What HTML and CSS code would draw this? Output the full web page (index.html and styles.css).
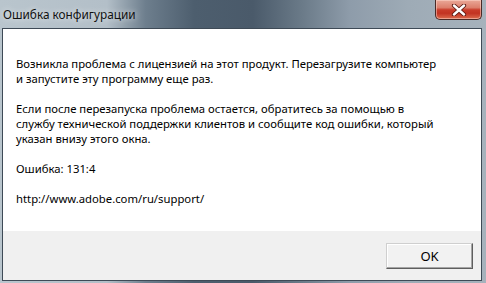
FILE: index.html
```html
<!DOCTYPE html>
<html>
<head>
<meta charset="UTF-8">
<title>Ошибка конфигурации</title>
<link rel="stylesheet" href="styles.css">
</head>
<body>
    <div class="window">
        <div class="titlebar">
            <span class="title">Ошибка конфигурации</span>
            <div class="close">
                <svg width="16" height="12" viewBox="0 0 16 12">
                    <path d="M3 1.5 L13 10.5 M13 1.5 L3 10.5" stroke="#5a1810" stroke-width="4.2" stroke-linecap="round"/>
                    <path d="M3 1.5 L13 10.5 M13 1.5 L3 10.5" stroke="#ffffff" stroke-width="2.4" stroke-linecap="round"/>
                </svg>
            </div>
        </div>
        <div class="client">
            <div class="message">
                <p>Возникла проблема с лицензией на этот продукт. Перезагрузите компьютер<br>и запустите эту программу еще раз.</p>
                <p>Если после перезапуска проблема остается, обратитесь за помощью в<br>службу технической поддержки клиентов и сообщите код ошибки, который<br>указан внизу этого окна.</p>
                <p>Ошибка: 131:4</p>
                <p>http://www.adobe.com/ru/support/</p>
            </div>
            <div class="footer">
                <button class="ok">OK</button>
            </div>
        </div>
    </div>
</body>
</html>
```

FILE: styles.css
```css
* {
    margin: 0;
    padding: 0;
    box-sizing: border-box;
}

body {
    width: 486px;
    height: 283px;
    overflow: hidden;
    font-family: "Noto Sans", "Open Sans", sans-serif;
    font-size: 11.3px;
    color: #000;
    background: linear-gradient(90deg, #b9c5cd 0%, #b3bfc8 22%, #6d7e8d 30%, #4d5e6e 40%, #4a5a6a 52%, #6a7a88 62%, #8e9caa 72%, #9eabb6 84%, #a6b2bc 100%);
}

.window {
    height: 283px;
    display: flex;
    flex-direction: column;
}

.titlebar {
    height: 28px;
    display: flex;
    justify-content: space-between;
    align-items: flex-start;
}

.title {
    padding-left: 3px;
    line-height: 28px;
    font-size: 11.8px;
    color: #111;
    text-shadow: 0 0 6px rgba(255, 255, 255, 0.8);
}

.close {
    width: 47px;
    height: 20px;
    margin-right: 4px;
    border: 1px solid #4a2a26;
    border-top: none;
    border-radius: 0 0 5px 5px;
    background: linear-gradient(180deg, #eaa898 0%, #dc7f6c 40%, #c93c2a 52%, #c23322 70%, #dc6c4e 100%);
    box-shadow: inset 0 0 0 1px rgba(255, 220, 210, 0.5);
    display: flex;
    justify-content: center;
    align-items: center;
}

.client {
    flex: 1;
    margin: 0 4px 2px 2px;
    border: 1px solid #3e4a56;
    display: flex;
    flex-direction: column;
}

.message {
    height: 202px;
    background-color: #fff;
    padding: 27px 0 0 13px;
    line-height: 15px;
}

.message p {
    margin-bottom: 15px;
}

.footer {
    flex: 1;
    background-color: #f0f0f0;
    display: flex;
    justify-content: flex-end;
    align-items: flex-start;
    padding: 12px 8px 0 0;
}

.ok {
    width: 87px;
    height: 26px;
    font-family: "Noto Sans", "Open Sans", sans-serif;
    font-size: 13px;
    color: #000;
    background-color: #f2f2f2;
    border: 1px solid;
    border-color: #cfcfcf #5e5e5e #5e5e5e #cfcfcf;
    box-shadow: inset -1px -1px 0 #a5a5a5, inset 1px 1px 0 #ffffff;
}
```
